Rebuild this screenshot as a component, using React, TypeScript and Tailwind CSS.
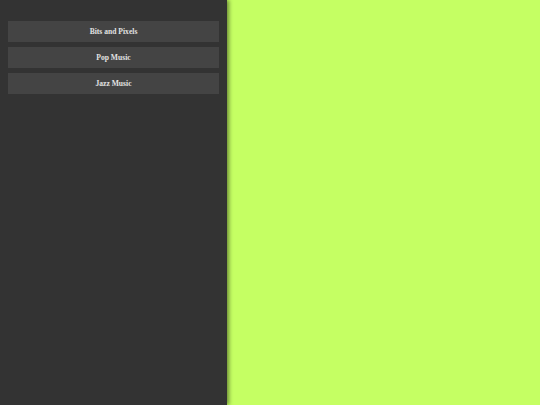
import React from 'react';

const ITEMS = ['Bits and Pixels', 'Pop Music', 'Jazz Music'];

export default function App() {
  return (
    <div className="flex h-[405px] w-[540px] overflow-hidden bg-[#c5ff63]">
      <aside className="relative z-10 flex w-[227px] shrink-0 flex-col gap-[5px] bg-[#333333] px-2 pt-[21px] shadow-[2px_0_4px_rgba(0,0,0,0.45)]">
        {ITEMS.map((item) => (
          <button
            key={item}
            className="flex h-[21px] w-full items-center justify-center bg-[#444444] text-[7.6px] font-bold text-[#e2e2e2] [font-family:'Liberation_Serif',serif]"
          >
            {item}
          </button>
        ))}
      </aside>
      <main className="flex-1" />
    </div>
  );
}
